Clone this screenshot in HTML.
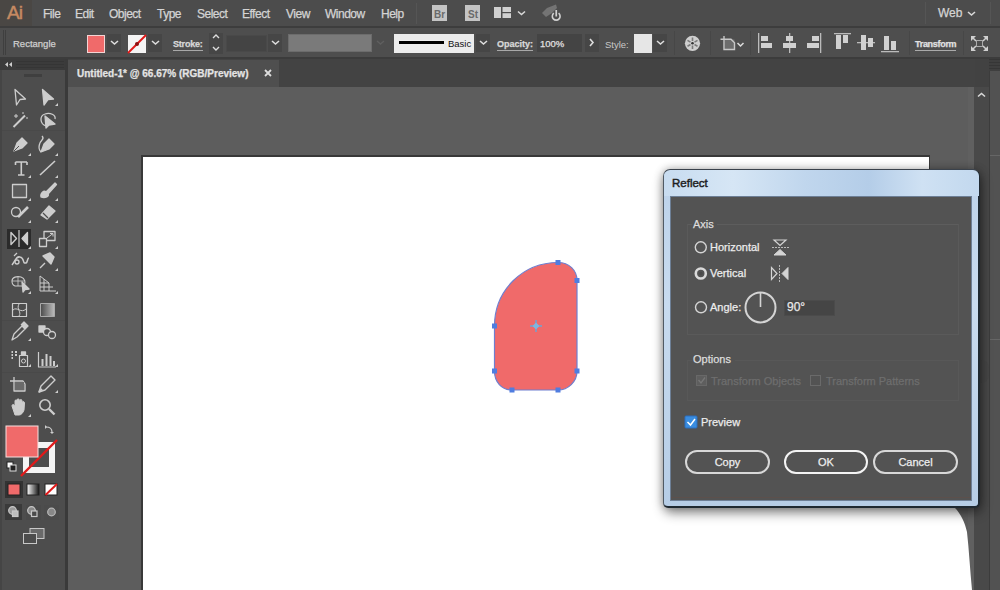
<!DOCTYPE html>
<html><head><meta charset="utf-8">
<style>
*{margin:0;padding:0;box-sizing:border-box}
html,body{width:1000px;height:590px;overflow:hidden;background:#424242;font-family:"Liberation Sans",sans-serif;position:relative}
.a{position:absolute}
.t{position:absolute;white-space:nowrap;color:#d6d6d6;font-size:12px;line-height:14px;-webkit-text-stroke:0.25px currentColor}
#menubar{left:0;top:0;width:1000px;height:26px;background:#4c4c4c}
#mline{left:0;top:26px;width:1000px;height:2px;background:#3d3d3d}
#ctrl{left:0;top:28px;width:1000px;height:29px;background:#4e4e4e}
#cline{left:0;top:57px;width:1000px;height:2px;background:#3c3c3c}
#tabbar{left:68px;top:59px;width:907px;height:28px;background:#434343}
#tab{left:68px;top:60px;width:211px;height:27px;background:#4f4f4f}
#canvas{left:68px;top:87px;width:901px;height:503px;background:#5d5d5d}
#toolhead{left:0;top:59px;width:65px;height:11px;background:#3b3b3b}
#tools{left:0;top:70px;width:65px;height:520px;background:#4d4d4d;border-left:2px solid #454545}
#divl{left:65px;top:59px;width:3px;height:531px;background:#3a3a3a}
#rstrip{left:969px;top:87px;width:31px;height:503px;background:#444}
#artboard{left:141px;top:155px;width:789px;height:435px;background:#fff;border-top:2px solid #383838;border-left:2px solid #383838;border-right:1px solid #383838}
.menu{top:7px;font-size:12px;letter-spacing:-0.5px;color:#d4d4d4}
.ctl{font-size:10px;color:#d8d8d8;top:37px}
.u{border-bottom:1px solid #a8a8a8;padding-bottom:0;line-height:12px}
.dd{position:absolute;background:#464646;top:34px;height:18px}
.sep{position:absolute;top:31px;width:1px;height:24px;background:#474747}
</style></head><body>
<div id="menubar" class="a"></div>
<div id="mline" class="a"></div>
<div id="ctrl" class="a"></div>
<div id="cline" class="a"></div>
<div id="tabbar" class="a"></div>
<div id="tab" class="a"></div>
<div id="canvas" class="a"></div>
<div id="artboard" class="a"></div>
<div id="toolhead" class="a"></div>
<div id="tools" class="a"></div>
<div id="divl" class="a"></div>
<div id="rstrip" class="a"></div>

<!-- MENU BAR -->
<div class="a" style="left:0;top:0;width:32px;height:26px;background:#4a4744"></div>
<div class="t" style="left:7px;top:2px;font-size:19px;line-height:22px;color:#c68a62;letter-spacing:-0.8px;-webkit-text-stroke:0.5px #c68a62">Ai</div>
<div class="t menu" style="left:43px">File</div>
<div class="t menu" style="left:75px">Edit</div>
<div class="t menu" style="left:109px">Object</div>
<div class="t menu" style="left:157px">Type</div>
<div class="t menu" style="left:197px">Select</div>
<div class="t menu" style="left:242px">Effect</div>
<div class="t menu" style="left:286px">View</div>
<div class="t menu" style="left:325px">Window</div>
<div class="t menu" style="left:381px">Help</div>
<div class="a" style="left:416px;top:3px;width:1px;height:21px;background:#555"></div>
<svg class="a" style="left:0;top:0" width="1000" height="26">
 <rect x="432" y="5" width="15" height="16" fill="#c4c4c4"/>
 <text x="434" y="17.5" font-family="Liberation Sans" font-size="10" font-weight="bold" fill="#6a6a6a">Br</text>
 <rect x="465" y="5" width="15" height="16" fill="#c4c4c4"/>
 <text x="468" y="17.5" font-family="Liberation Sans" font-size="10" font-weight="bold" fill="#6a6a6a">St</text>
 <rect x="494" y="7" width="17" height="11" fill="#d0d0d0"/>
 <rect x="501" y="7" width="1.5" height="11" fill="#4c4c4c"/>
 <rect x="502" y="12" width="9" height="1.2" fill="#4c4c4c"/>
 <path d="M518 11.5 L521.5 14.5 L525 11.5" stroke="#d8d8d8" stroke-width="1.6" fill="none"/>
 <path d="M542 13 L547 8 L556 4.5 L557 8 L552 13 L546 17 Z" fill="#747474"/>
 <path d="M553.8 13.2 A3.9 3.9 0 1 0 558.6 13.2" stroke="#d2d2d2" stroke-width="1.6" fill="none"/>
 <rect x="555.4" y="10" width="1.7" height="6.5" fill="#d2d2d2"/>
 <rect x="925" y="2" width="1" height="22" fill="#555"/>
 <path d="M968 12 L971.5 15 L975 12" stroke="#d8d8d8" stroke-width="1.6" fill="none"/>
 <rect x="990" y="2" width="1" height="22" fill="#555"/>
</svg>
<div class="t" style="left:938px;top:6px;font-size:12px;color:#d4d4d4">Web</div>

<!-- CONTROL BAR -->
<div class="a" style="left:3px;top:30px;width:1px;height:25px;background:#3f3f3f"></div>
<div class="a" style="left:5px;top:30px;width:1px;height:25px;background:#3f3f3f"></div>
<div class="t ctl" style="left:13px;font-size:9.5px;top:37px;color:#d0d0d0">Rectangle</div>
<div class="a" style="left:87px;top:35px;width:18px;height:18px;background:#f06a6a;border:1px solid #f4d4d4"></div>
<div class="dd" style="left:107px;width:14px"></div>
<div class="a" style="left:128px;top:35px;width:18px;height:18px;background:#f4f4f4"></div>
<div class="dd" style="left:148px;width:14px"></div>
<div class="t ctl u" style="left:173px;top:38px;font-weight:bold;font-size:9px;letter-spacing:-0.2px">Stroke:</div>
<div class="dd" style="left:209px;width:14px;top:33px;height:21px"></div>
<div class="a" style="left:226px;top:35px;width:41px;height:17px;background:#444;border:1px solid #494949"></div>
<div class="dd" style="left:268px;width:14px"></div>
<div class="a" style="left:288px;top:34px;width:84px;height:18px;background:#7a7a7a;border:1px solid #6c6c6c"></div>
<div class="a" style="left:394px;top:34px;width:80px;height:19px;background:#ececec"></div>
<div class="a" style="left:399px;top:41px;width:45px;height:3px;background:#000"></div>
<div class="t" style="left:448px;top:37px;font-size:9.5px;color:#111;-webkit-text-stroke:0">Basic</div>
<div class="dd" style="left:476px;width:14px"></div>
<div class="t ctl u" style="left:497px;top:38px;font-weight:bold;font-size:9px">Opacity:</div>
<div class="a" style="left:537px;top:34px;width:45px;height:18px;background:#444"></div>
<div class="t ctl" style="left:540px;top:37px;font-size:9.5px;color:#e0e0e0">100%</div>
<div class="dd" style="left:585px;width:14px"></div>
<div class="t ctl" style="left:605px;top:38px;font-size:9.5px;color:#c8c8c8;-webkit-text-stroke:0">Style:</div>
<div class="a" style="left:634px;top:34px;width:18px;height:19px;background:#e6e6e6"></div>
<div class="dd" style="left:653px;width:14px"></div>
<div class="sep" style="left:674px"></div>
<div class="sep" style="left:710px"></div>
<div class="sep" style="left:750px"></div>
<div class="sep" style="left:909px"></div>
<div class="sep" style="left:963px"></div>
<div class="t ctl u" style="left:915px;top:38px;font-size:9px;font-weight:bold;letter-spacing:-0.3px;color:#e2e2e2;border-bottom:1px solid #aaa">Transform</div>
<svg class="a" style="left:0;top:28px" width="1000" height="30">
 <!-- fill dd chevron -->
 <path d="M111 13 L114.5 16 L118 13" stroke="#ddd" stroke-width="1.6" fill="none"/>
 <path d="M152 13 L155.5 16 L159 13" stroke="#ddd" stroke-width="1.6" fill="none"/>
 <line x1="128" y1="25" x2="146" y2="7" stroke="#e01818" stroke-width="2"/>
 <circle cx="137" cy="16" r="2" fill="#8a0f0f"/>
 <path d="M213 10 L216 7 L219 10 M213 19 L216 22 L219 19" stroke="#ddd" stroke-width="1.4" fill="none"/>
 <path d="M272 13 L275.5 16 L279 13" stroke="#ddd" stroke-width="1.6" fill="none"/>
 <path d="M377 13 L380.5 16 L384 13" stroke="#5f5f5f" stroke-width="1.4" fill="none"/>
 <path d="M480 13 L483.5 16 L487 13" stroke="#ddd" stroke-width="1.6" fill="none"/>
 <path d="M590 11 L593 14.5 L590 18" stroke="#ddd" stroke-width="1.6" fill="none"/>
 <path d="M657 13 L660.5 16 L664 13" stroke="#ddd" stroke-width="1.6" fill="none"/>
 <!-- globe -->
 <circle cx="692.5" cy="15.3" r="7.6" fill="#cfcfcf"/>
 <g stroke="#7a7a7a" stroke-width="1.6"><path d="M692.5 9.5 V13 M692.5 17.6 V21 M687.5 12.4 L690.5 14.1 M694.5 16.5 L697.5 18.2 M697.5 12.4 L694.5 14.1 M690.5 16.5 L687.5 18.2"/></g>
 <circle cx="692.5" cy="15.3" r="1.3" fill="#333"/>
 <!-- crop -->
 <rect x="724.5" y="11.5" width="10" height="10" fill="#6c6c6c"/>
 <path d="M720.5 11.3 H731 L734.5 14.8 V21.5 H724 V8" stroke="#c8c8c8" stroke-width="1.4" fill="none"/>
 <path d="M737.5 15 L740.5 18 L743.5 15" stroke="#ddd" stroke-width="1.5" fill="none"/>
 <!-- align left -->
 <rect x="758" y="5" width="1.3" height="20" fill="#bbb"/>
 <rect x="761" y="8" width="7" height="5" fill="#d0d0d0"/>
 <rect x="761" y="15" width="11" height="5" fill="#d0d0d0"/>
 <!-- align hcenter -->
 <rect x="789" y="5" width="1.3" height="20" fill="#bbb"/>
 <rect x="786" y="8" width="7" height="5" fill="#d0d0d0"/>
 <rect x="783" y="15" width="13" height="5" fill="#d0d0d0"/>
 <!-- align right -->
 <rect x="820" y="5" width="1.3" height="20" fill="#bbb"/>
 <rect x="812" y="8" width="7" height="5" fill="#d0d0d0"/>
 <rect x="807" y="15" width="12" height="5" fill="#d0d0d0"/>
 <!-- align top -->
 <rect x="834" y="5" width="17" height="1.3" fill="#bbb"/>
 <rect x="836" y="7" width="5" height="14" fill="#d0d0d0"/>
 <rect x="843" y="7" width="5" height="8" fill="#d0d0d0"/>
 <!-- align vcenter -->
 <rect x="857" y="14" width="18" height="1.3" fill="#bbb"/>
 <rect x="861" y="7" width="5" height="15" fill="#d0d0d0"/>
 <rect x="868" y="10" width="5" height="9" fill="#d0d0d0"/>
 <!-- align bottom -->
 <rect x="881" y="23" width="18" height="1.3" fill="#bbb"/>
 <rect x="884" y="8" width="5" height="14" fill="#d0d0d0"/>
 <rect x="891" y="13" width="5" height="9" fill="#d0d0d0"/>
 <!-- last icon -->
 <path d="M971 8 L976 8 L971 13 Z M988 8 L983 8 L988 13 Z M971 23 L976 23 L971 18 Z M988 23 L983 23 L988 18 Z" fill="#d0d0d0"/>
 <path d="M973 10 L976 13 M986 10 L983 13 M973 21 L976 18 M986 21 L983 18" stroke="#d0d0d0" stroke-width="1.5"/>
 <rect x="976.5" y="12.5" width="6" height="6" fill="none" stroke="#aaa" stroke-width="1"/>
</svg>

<!-- TAB -->
<div class="t" style="left:77px;top:67px;font-size:10px;font-weight:bold;color:#e4e4e4">Untitled-1* @ 66.67% (RGB/Preview)</div>
<svg class="a" style="left:262px;top:67px" width="12" height="12"><path d="M3 3 L9 9 M9 3 L3 9" stroke="#ddd" stroke-width="1.8"/></svg>

<!-- TOOLBAR head -->
<svg class="a" style="left:0;top:59px" width="65" height="11">
 <path d="M5 5.5 L8 3 V8 Z M9 5.5 L12 3 V8 Z" fill="#cfcfcf"/>
 <rect x="16" y="2" width="48" height="1" fill="#353535"/><rect x="16" y="5" width="48" height="1" fill="#353535"/><rect x="16" y="8" width="48" height="1" fill="#353535"/>
</svg>
<div class="a" style="left:24px;top:74px;width:18px;height:3px;background:#3f3f3f"></div>

<!-- TOOLS -->
<div class="a" style="left:7px;top:229px;width:24px;height:20px;background:#2b2b2b"></div>
<div class="a" style="left:5px;top:504px;width:17px;height:16px;background:#3a3a3a"></div>
<svg class="a" style="left:0;top:0" width="66" height="590">
 <g stroke="#cdcdcd" stroke-width="1.3" fill="none" stroke-linejoin="round">
  <!-- selection -->
  <path d="M15 89.5 L25.5 99 L20 99.5 L16.5 105 Z"/>
  <!-- direct select (filled) -->
  <path d="M42.5 89.5 L53.5 99 L48 99.5 L44 105 Z" fill="#cdcdcd"/>
  <!-- magic wand -->
  <path d="M13.5 127 L25 115.5" stroke-width="2"/>
  <path d="M16 114 V118 M14 116 H18 M23 112 V114 M27 117 V119" stroke-width="1"/>
  <!-- lasso -->
  <path d="M46 126 C40 124 39 116 45 114 C50 112 56 115 55 119" />
  <path d="M45 116 L55 124 L49 125 L46 128 Z" fill="#cdcdcd"/>
  <!-- pen -->
  <path d="M14 151 L17 143 L22 138 L27 143 L22 148 Z" fill="#cdcdcd"/>
  <path d="M14 151 L19 146" stroke="#4d4d4d" stroke-width="1"/>
  <!-- curvature pen -->
  <path d="M41 152 L44 144 L49 139 L54 144 L49 149 Z" fill="#cdcdcd"/>
  <path d="M41 152 C37 148 40 142 42 140 C44 138 42 136 42 136" />
  <!-- type -->
  <path d="M15.5 162 H27 M15.5 162 V165 M27 162 V165 M21.3 162 V175 M18 175 H24.5" stroke-width="1.6"/>
  <!-- line -->
  <path d="M40 175 L55 161" stroke-width="1.6"/>
  <!-- rect -->
  <rect x="12.5" y="184.5" width="14" height="13" fill="#5c5c5c"/>
  <!-- paintbrush -->
  <path d="M41 197 C40 193 44 190 46 192 L55 183 L56.5 184.5 L48 194 C50 196 45 199 41 197 Z" fill="#cdcdcd"/>
  <!-- shaper -->
  <circle cx="16" cy="212" r="4.5"/>
  <path d="M18 217 L28 207" stroke-width="2.6"/>
  <!-- eraser -->
  <path d="M41 215 L49 206 L55 211 L47 219 Z" fill="#cdcdcd"/>
  <path d="M43 213 L48 218" stroke="#4d4d4d"/>
  <!-- reflect -->
  <path d="M11 232.5 L16.5 238.5 L11 244.5 Z" stroke-width="1.4"/>
  <path d="M19 230 V247" stroke-width="1.2"/>
  <path d="M27.5 232.5 L22 238.5 L27.5 244.5 Z" fill="#cdcdcd"/>
  <!-- scale -->
  <rect x="44" y="231.5" width="11" height="9" />
  <rect x="39.5" y="238.5" width="7" height="8" fill="#4d4d4d"/>
  <path d="M47 238 L53 233.5 M50 233.5 H53 V236.5" stroke-width="1"/>
  <!-- puppet warp -->
  <path d="M12 265 C16 260 16 256 20 257 C25 258 22 264 26 263 C28 262 27 258 29 258" stroke-width="1.5"/>
  <circle cx="17" cy="262" r="2"/>
  <path d="M14 256 L17 253" stroke-width="1.2"/>
  <!-- pin -->
  <path d="M40 268 L45 263 M43 256 L50 253 L54 257 L51 264 Z" stroke-width="1.4" fill="#cdcdcd"/>
  <!-- free transform -->
  <path d="M12 281 C12 277 17 276 21 277 C25 278 26 283 24 286 L15 286 C12 285 12 283 12 281 Z" stroke-width="1.1"/>
  <path d="M12 281 H24 M18 277 V286" stroke-width="0.8"/>
  <path d="M22 282 L29 289 L25 289.5 L23 292 Z" fill="#cdcdcd"/>
  <!-- perspective grid -->
  <path d="M40 276 V291 H56 M40 276 L49 283 V291 M44 279 V291 M40 283 H49 M40 287 H53" stroke-width="1"/>
  <!-- mesh -->
  <rect x="12.5" y="303.5" width="14" height="13" stroke-width="1.2"/>
  <path d="M13 310 C17 306 21 314 26 309 M19 304 C16 309 22 312 19 316" stroke-width="1"/>
  <!-- gradient -->
  <rect x="40.5" y="303.5" width="14" height="13" stroke="#aaa" stroke-width="1" fill="url(#gr)"/>
  <!-- eyedropper -->
  <path d="M12 340 L14 334 L22 326 L25 329 L17 337 Z" stroke-width="1.3"/>
  <path d="M21 325 L24 322 L28 326 L25 329" fill="#cdcdcd"/>
  <!-- blend -->
  <rect x="39" y="326" width="6" height="6" fill="#cdcdcd"/>
  <circle cx="47" cy="332" r="3.5" fill="#4d4d4d"/>
  <circle cx="52" cy="335" r="3.5" fill="#4d4d4d"/>
  <!-- symbol sprayer -->
  <path d="M11.5 352 H13 M15 352 H17 M11.5 355 H13 M15 355 H17 M11.5 358 H13" stroke-width="1.8"/>
  <rect x="19.5" y="355.5" width="8" height="11" stroke-width="1.2"/>
  <circle cx="23.5" cy="361" r="2" stroke-width="1"/>
  <rect x="21.5" y="352" width="4" height="3" fill="#cdcdcd"/>
  <!-- graph -->
  <path d="M38.5 352 V367 H56" stroke-width="1.2"/>
  <rect x="41.5" y="359" width="2" height="7" fill="#cdcdcd" stroke="none"/>
  <rect x="45.5" y="354" width="2" height="12" fill="#cdcdcd" stroke="none"/>
  <rect x="49.5" y="356" width="2" height="10" fill="#cdcdcd" stroke="none"/>
  <rect x="53" y="361" width="2" height="5" fill="#cdcdcd" stroke="none"/>
  <!-- artboard -->
  <path d="M10 381 H14 M14 377 V391 H25 V384 L23 381 H14" stroke-width="1.3"/>
  <rect x="15" y="382" width="9" height="8" fill="#6a6a6a" stroke="none"/>
  <!-- pencil -->
  <path d="M39 392 L41 386 L51 376 L55 380 L45 390 Z" stroke-width="1.4"/>
  <path d="M39 392 L42 389" stroke-width="2"/>
  <!-- hand -->
  <path d="M15 415 L12 406 C12 404 14 404 15 406 L15 401 C15 399.5 17 399.5 17 401 L17 400 C17 398.5 19 398.5 19.5 400 L20 400.5 C20 399 22 399 22 401 L22 403 C22 401 24.5 401 24.5 403 L24 410 C23 413 21 415 19 415 Z" fill="#cdcdcd" stroke-width="1"/>
  <!-- zoom -->
  <circle cx="45" cy="405" r="5.2" stroke-width="1.6"/>
  <path d="M49 409 L54.5 414.5" stroke-width="2.4"/>
 </g>
 <defs><linearGradient id="gr" x1="0" x2="1"><stop offset="0" stop-color="#4a4a4a"/><stop offset="1" stop-color="#bdbdbd"/></linearGradient>
 <linearGradient id="gr2" x1="0" x2="1"><stop offset="0" stop-color="#fff"/><stop offset="1" stop-color="#111"/></linearGradient></defs>
 <!-- small triangles -->
 <g fill="#cdcdcd">
  <path d="M58 103 V106 H55 Z"/><path d="M31 153 V156 H28 Z"/><path d="M58 153 V156 H55 Z"/>
  <path d="M31 175 V178 H28 Z"/><path d="M58 175 V178 H55 Z"/><path d="M31 198 V201 H28 Z"/><path d="M58 198 V201 H55 Z"/>
  <path d="M31 220 V223 H28 Z"/><path d="M58 220 V223 H55 Z"/><path d="M31 246 V249 H28 Z"/><path d="M58 246 V249 H55 Z"/>
  <path d="M31 268 V271 H28 Z"/><path d="M58 268 V271 H55 Z"/><path d="M31 291 V294 H28 Z"/><path d="M58 291 V294 H55 Z"/>
  <path d="M31 338 V341 H28 Z"/><path d="M31 364 V367 H28 Z"/><path d="M58 364 V367 H55 Z"/>
  <path d="M58 390 V393 H55 Z"/><path d="M31 414 V417 H28 Z"/>
 </g>
 <rect x="2" y="130" width="63" height="1" fill="#494949"/>
 <rect x="2" y="320" width="63" height="1" fill="#494949"/><rect x="2" y="372" width="63" height="1" fill="#494949"/>
 <!-- fill/stroke -->
 <rect x="23" y="442" width="32" height="31" fill="#f4f4f4"/>
 <rect x="29" y="448" width="20" height="19" fill="#4d4d4d"/>
 <line x1="21" y1="476" x2="57" y2="440" stroke="#e01a1a" stroke-width="2.4"/>
 <rect x="6" y="426" width="32" height="31" fill="#f06a6a" stroke="#f7e0e0" stroke-width="1"/>
 <path d="M46 427 C50 427 52 429 52 432" stroke="#cdcdcd" stroke-width="1.2" fill="none"/>
 <path d="M45 425 L47 427 L45 429 Z M50 432 L52 434 L54 432 Z" fill="#cdcdcd"/>
 <rect x="7" y="462" width="6" height="6" fill="#fff" stroke="#222" stroke-width="1"/>
 <rect x="10" y="465" width="6" height="6" fill="#222" stroke="#ddd" stroke-width="1"/>
 <!-- small swatches -->
 <rect x="5" y="481" width="18" height="17" fill="#333"/>
 <rect x="8" y="484" width="12" height="11" fill="#f06a6a" stroke="#222" stroke-width="1"/>
 <rect x="27" y="484" width="12" height="11" fill="url(#gr2)" stroke="#222" stroke-width="1"/>
 <rect x="45" y="484" width="12" height="11" fill="#fff" stroke="#222" stroke-width="1"/>
 <line x1="45.5" y1="495" x2="57" y2="484" stroke="#e01a1a" stroke-width="2"/>
 <!-- draw modes -->
 <rect x="26" y="505" width="15" height="15" fill="#4a4a4a"/>
 <rect x="44" y="505" width="15" height="15" fill="#4b4b4b"/>
 <g stroke="#c8c8c8" stroke-width="1.2">
  <circle cx="12.5" cy="510.5" r="3.8" fill="#9a9a9a"/><rect x="12.5" y="511" width="5.5" height="5.5" fill="#bdbdbd"/>
  <circle cx="31.5" cy="510.5" r="3.8" fill="#8a8a8a"/><rect x="31.5" y="511" width="5.5" height="5.5" fill="#4a4a4a"/>
  <circle cx="51.5" cy="512" r="3.8" fill="#888" stroke="#b8b8b8"/>
 </g>
 <!-- screen mode -->
 <rect x="30" y="528.5" width="14" height="10" fill="#6a6a6a" stroke="#c8c8c8" stroke-width="1"/>
 <rect x="23.5" y="533.5" width="13" height="10" fill="#4d4d4d" stroke="#c8c8c8" stroke-width="1"/>
</svg>

<!-- CANVAS SHAPE -->
<svg class="a" style="left:0;top:0" width="1000" height="590">
 <path d="M558 262.5 C569 262.5 577 270 577 280.5 L577 371 C577 382 568 390 558 390 L512 390 C501.5 390 494.5 382 494.5 371 L494.5 326 C494.5 290 523 262.5 558 262.5 Z" fill="#f06a6a" stroke="#6f7fcf" stroke-width="1.2"/>
 <g fill="#4f7de0">
  <rect x="555.5" y="260" width="5" height="5"/><rect x="574.5" y="278" width="5" height="5"/>
  <rect x="492" y="323.5" width="5" height="5"/><rect x="492" y="368.5" width="5" height="5"/>
  <rect x="509.5" y="387.5" width="5" height="5"/><rect x="555.5" y="387.5" width="5" height="5"/>
  <rect x="574.5" y="368.5" width="5" height="5"/>
 </g>
 <path d="M536 320 V332 M530 326 H542" stroke="#6aa6d8" stroke-width="1.4"/>
 <path d="M536 322.5 L539.5 326 L536 329.5 L532.5 326 Z" fill="#7fb6e0"/>
</svg>

<!-- RIGHT STRIP -->
<div class="a" style="left:968px;top:87px;width:6px;height:503px;background:#606060"></div>
<div class="a" style="left:974px;top:87px;width:15px;height:503px;background:#494949"></div>
<div class="a" style="left:989px;top:71px;width:11px;height:519px;background:#525252;border-left:1px solid #3c3c3c"></div>
<div class="a" style="left:989px;top:59px;width:11px;height:12px;background:#3f3f3f;background-image:repeating-linear-gradient(180deg,#363636 0 1px,transparent 1px 3px)"></div>
<svg class="a" style="left:974px;top:87px" width="15" height="20"><path d="M4 9.5 L7.5 6.5 L11 9.5" stroke="#d8d8d8" stroke-width="1.6" fill="none"/></svg>
<div class="a" style="left:977px;top:360px;width:12px;height:23px;background:#474747;border-radius:0 8px 8px 0"></div>
<div class="a" style="left:990px;top:155px;width:10px;height:1px;background:#666"></div>
<div class="a" style="left:990px;top:339px;width:10px;height:1px;background:#666"></div>
<!-- bottom right white blob -->
<svg class="a" style="left:900px;top:500px" width="90" height="90">
 <path d="M0 0 H44 C56 5 64 18 67 32 C69 50 70 70 72 90 H0 Z" fill="#fff"/>
</svg>
<!-- DIALOG -->
<div class="a" style="left:663px;top:169px;width:317px;height:339px;border-radius:7px;box-shadow:1px 5px 12px rgba(0,0,0,0.45), 0 0 9px rgba(0,0,0,0.25)"></div>
<div class="a" style="left:663px;top:169px;width:317px;height:339px;border-radius:7px 7px 5px 5px;background:linear-gradient(180deg,#bcd2ea 0%,#c8dbef 40%,#b6cde6 100%);border:2px solid #27313b;border-color:#3a424c #1f2931 #1f2931 #505a64;border-left-width:1px"></div>
<div class="a" style="left:664px;top:170px;width:315px;height:26px;border-radius:6px 6px 0 0;background:linear-gradient(90deg,#c8dcf0 0%,#d6e6f5 22%,#c0d6ed 45%,#b4cde8 65%,#cfe1f3 82%,#c2d8ee 100%)"></div>
<div class="a" style="left:670px;top:196px;width:302px;height:305px;background:#535353;border:1px solid #6d7f96"></div>
<div class="a" style="left:671px;top:497px;width:300px;height:1px;background:#5c504c"></div>
<div class="t" style="left:672px;top:176px;font-size:11.5px;color:#1e1e1e;-webkit-text-stroke:0.45px #1e1e1e">Reflect</div>


<!-- DIALOG CONTENT -->
<div class="a" style="left:687px;top:224px;width:272px;height:111px;border:1px solid #5a5a5a;border-top-color:#5d5d5d"></div>
<div class="a" style="left:692px;top:218px;width:25px;height:12px;background:#535353"></div>
<div class="t" style="left:693px;top:217px;font-size:11px;color:#dcdcdc">Axis</div>
<div class="a" style="left:687px;top:360px;width:272px;height:41px;border:1px solid #585858"></div>
<div class="a" style="left:692px;top:353px;width:43px;height:12px;background:#535353"></div>
<div class="t" style="left:693px;top:352px;font-size:11px;color:#dcdcdc">Options</div>
<div class="t" style="left:710px;top:240px;font-size:11px;color:#ececec">Horizontal</div>
<div class="t" style="left:710px;top:266px;font-size:11px;color:#ececec">Vertical</div>
<div class="t" style="left:710px;top:300px;font-size:11px;color:#ececec">Angle:</div>
<div class="a" style="left:784px;top:300px;width:51px;height:16px;background:#454545;border:1px solid #4b4b4b"></div>
<div class="t" style="left:787px;top:300px;font-size:12px;color:#e8e8e8">90°</div>
<div class="t" style="left:711px;top:374px;font-size:11px;color:#6e6e6e">Transform Objects</div>
<div class="t" style="left:826px;top:374px;font-size:11px;color:#6e6e6e">Transform Patterns</div>
<div class="t" style="left:701px;top:415px;font-size:11px;color:#ececec">Preview</div>
<div class="a" style="left:685px;top:450px;width:85px;height:24px;border:2px solid #d8d8d8;border-radius:12px"></div>
<div class="a" style="left:784px;top:450px;width:84px;height:24px;border:2.5px solid #f4f4f4;border-radius:12px"></div>
<div class="a" style="left:873px;top:450px;width:85px;height:24px;border:2px solid #d8d8d8;border-radius:12px"></div>
<div class="t" style="left:685px;top:455px;width:85px;text-align:center;font-size:11px;color:#eee">Copy</div>
<div class="t" style="left:784px;top:455px;width:84px;text-align:center;font-size:11px;color:#eee">OK</div>
<div class="t" style="left:873px;top:455px;width:85px;text-align:center;font-size:11px;color:#eee">Cancel</div>
<svg class="a" style="left:660px;top:230px" width="320" height="210">
 <g stroke="#d4d4d4" fill="none">
  <circle cx="40.8" cy="17.3" r="5.5" stroke-width="1.4"/>
  <circle cx="40.8" cy="43.5" r="5" stroke-width="2.6" stroke="#dadada"/>
  <circle cx="40.8" cy="43.5" r="1.8" fill="#4a4a4a" stroke="none"/>
  <circle cx="41" cy="77.3" r="5.5" stroke-width="1.4"/>
  <circle cx="100.5" cy="77.4" r="15" stroke-width="2"/>
  <path d="M100.5 62.5 V77" stroke-width="1.6"/>
  <!-- horiz icon -->
  <path d="M114 10 H126 L120 15.5 Z" stroke-width="1.2"/>
  <path d="M112 17.5 H129" stroke-width="0.8" stroke-dasharray="2 1"/>
  <path d="M114 25 H126 L120 19.5 Z" fill="#d4d4d4" stroke-width="1"/>
  <!-- vert icon -->
  <path d="M111.5 37.5 V49.5 L117 43.5 Z" stroke-width="1.2"/>
  <path d="M119.5 35 V52" stroke-width="0.8" stroke-dasharray="2 1"/>
  <path d="M128 37.5 V49.5 L122 43.5 Z" fill="#d4d4d4" stroke-width="1"/>
 </g>
 <!-- options checkboxes -->
 <rect x="36.5" y="145.5" width="10" height="10" fill="#5e5e5e" stroke="#686868"/>
 <path d="M38.5 150 L41 153 L45 147.5" stroke="#777" stroke-width="1.3" fill="none"/>
 <rect x="150.5" y="145.5" width="10" height="10" fill="none" stroke="#6a6a6a"/>
 <!-- preview checkbox -->
 <rect x="25" y="186" width="12" height="12" rx="1" fill="#3a8de0" stroke="#2a6fc0"/>
 <path d="M27.5 192 L30.5 195 L35 189" stroke="#fff" stroke-width="1.5" fill="none"/>
</svg>
</body></html>
